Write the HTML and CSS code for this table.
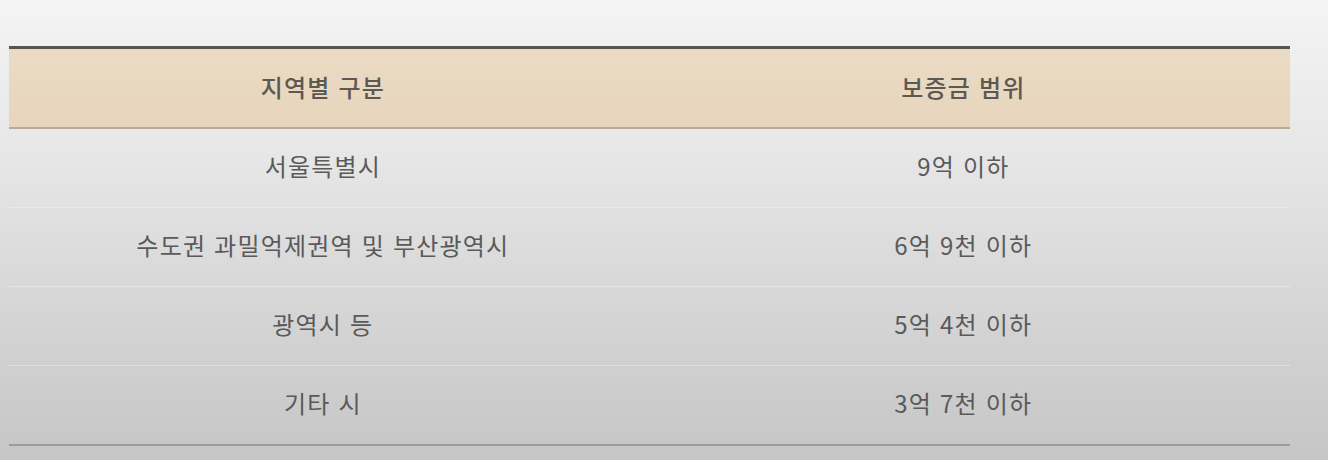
FILE: index.html
```html
<!DOCTYPE html>
<html lang="ko">
<head>
<meta charset="utf-8">
<link rel="stylesheet" href="styles.css">
</head>
<body>
<div class="page">
  <table class="deposit">
    <thead>
      <tr><th class="c1">지역별 구분</th><th class="c2">보증금 범위</th></tr>
    </thead>
    <tbody>
      <tr><td>서울특별시</td><td>9억 이하</td></tr>
      <tr><td>수도권 과밀억제권역 및 부산광역시</td><td>6억 9천 이하</td></tr>
      <tr><td>광역시 등</td><td>5억 4천 이하</td></tr>
      <tr><td>기타 시</td><td>3억 7천 이하</td></tr>
    </tbody>
  </table>
</div>
</body>
</html>
```
FILE: styles.css
```css
html, body {
  margin: 0;
  height: 100%;
}
body {
  background: linear-gradient(to bottom, #f4f4f4 0%, #e6e6e6 35%, #d4d4d4 70%, #c6c6c6 100%);
  font-family: "Noto Sans CJK KR", "Noto Sans", sans-serif;
  overflow: hidden;
}
.page {
  padding: 46px 0 0 9px;
}
.deposit {
  width: 1281px;
  border-collapse: collapse;
  border-top: 3px solid #56564e;
  border-bottom: 2px solid #9c9c9c;
  color: #5a5a5a;
  font-size: 24px;
  letter-spacing: 1.2px;
}
.deposit th {
  background: linear-gradient(to bottom, #ecdbc4, #e6d4bc);
  font-weight: 500;
  height: 74px;
  padding: 0 0 4px 0;
  border-bottom: 2px solid #b9ab98;
  color: #5c5852;
}
.deposit .c1 { width: 49%; }
.deposit td {
  text-align: center;
  height: 73px;
  padding: 0 0 5px 0;
  font-weight: 400;
  border-top: 1px solid rgba(255,255,255,0.35);
}
.deposit tbody tr:first-child td { border-top: none; }
```
